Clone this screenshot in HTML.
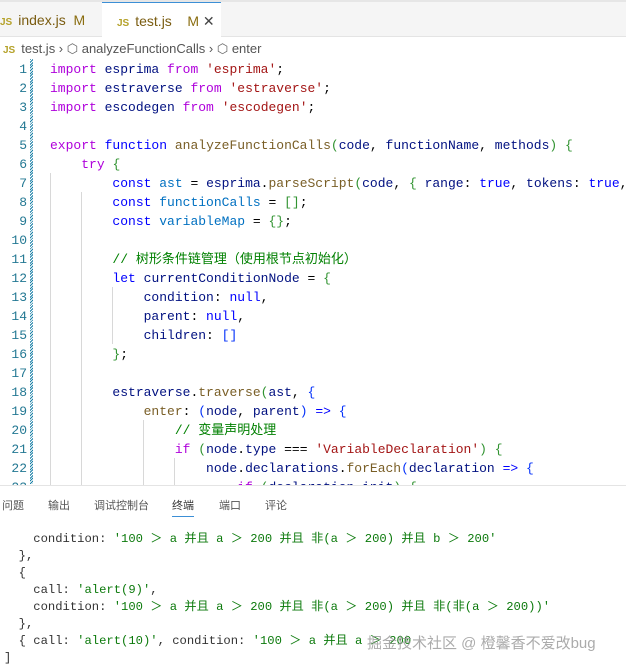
<!DOCTYPE html>
<html><head><meta charset="utf-8"><style>
*{margin:0;padding:0;box-sizing:border-box}
body{width:626px;height:670px;overflow:hidden;background:#fff;position:relative;font-family:"Liberation Sans","Noto Sans CJK SC",sans-serif}
.tabbar{position:absolute;left:0;top:0;width:626px;height:37px;background:#f5f5f5;border-top:2px solid #e6e6e6;border-bottom:1px solid #e4e4e4}
.tab{position:absolute;top:0;height:36px;font-size:14px;line-height:36px;color:#7a5c10}
.js{font-size:10px;font-weight:bold;color:#b5a22a;margin-right:6px}
.m{color:#8a6d10}
.bc{position:absolute;top:38px;left:0;height:22px;font-size:13px;line-height:22px;color:#555;white-space:nowrap}
.code{position:absolute;left:0;top:60px;font-family:"Liberation Mono","Noto Sans CJK SC",monospace;font-size:13px;line-height:19px;white-space:pre}
.ln{position:absolute;left:0;width:27px;text-align:right;color:#237893}
.tx{position:absolute;left:50px;color:#000}
.k{color:#af00db}.b{color:#0000ff}.v{color:#001080}.f{color:#795e26}.s{color:#a31515}.c{color:#008000}.p{color:#0431fa}.y{color:#319331}
.gut{position:absolute;left:30px;top:59px;width:3px;height:425px;background:repeating-linear-gradient(135deg,#1b81a8 0 1px,#fff 1px 2px)}
.g{position:absolute;width:1px;background:#d8d8d8}
.panel{position:absolute;left:0;top:485px;width:626px;height:185px;background:#fff;border-top:1px solid #e4e4e4}
.pt{position:absolute;top:11px;font-size:11px;color:#555}
.term{position:absolute;left:4px;top:531px;font-family:"Liberation Mono","Noto Sans CJK SC",monospace;font-size:12.2px;line-height:17px;white-space:pre;color:#333}
.t{color:#0c7a0c}
.wm{position:absolute;left:367px;top:632px;font-size:15px;color:rgba(150,150,150,.8);white-space:nowrap}
</style></head><body>
<div class="tabbar">
 <div class="tab" style="left:0;width:101px;padding-left:0"><span class="js">JS</span>index.js&nbsp; <span class="m">M</span></div>
 <div class="tab" style="left:102px;width:119px;background:#fff;border-top:1px solid #3c8fd6;padding-left:15px;height:36px"><span class="js">JS</span>test.js &nbsp; &nbsp;<span class="m">M</span> <span style="color:#444">✕</span></div>
</div>
<div class="bc"><span class="js" style="margin-left:3px">JS</span>test.js › <span style="color:#666">⬡</span> analyzeFunctionCalls › <span style="color:#666">⬡</span> enter</div>
<div class="gut"></div>
<div class="g" style="left:50px;top:173px;height:312px"></div>
<div class="g" style="left:81px;top:192px;height:293px"></div>
<div class="g" style="left:112px;top:287px;height:57px"></div>
<div class="g" style="left:143px;top:420px;height:65px"></div>
<div class="g" style="left:174px;top:458px;height:27px"></div>
<div class="code">
<div class="ln" style="top:0">1</div><div class="tx" style="top:0"><span class="k">import</span> <span class="v">esprima</span> <span class="k">from</span> <span class="s">'esprima'</span>;</div>
<div class="ln" style="top:19px">2</div><div class="tx" style="top:19px"><span class="k">import</span> <span class="v">estraverse</span> <span class="k">from</span> <span class="s">'estraverse'</span>;</div>
<div class="ln" style="top:38px">3</div><div class="tx" style="top:38px"><span class="k">import</span> <span class="v">escodegen</span> <span class="k">from</span> <span class="s">'escodegen'</span>;</div>
<div class="ln" style="top:57px">4</div>
<div class="ln" style="top:76px">5</div><div class="tx" style="top:76px"><span class="k">export</span> <span class="b">function</span> <span class="f">analyzeFunctionCalls</span><span class="y">(</span><span class="v">code</span>, <span class="v">functionName</span>, <span class="v">methods</span><span class="y">)</span> <span class="y">{</span></div>
<div class="ln" style="top:95px">6</div><div class="tx" style="top:95px">    <span class="k">try</span> <span class="y">{</span></div>
<div class="ln" style="top:114px">7</div><div class="tx" style="top:114px">        <span class="b">const</span> <span class="b" style="color:#0070c1">ast</span> = <span class="v">esprima</span>.<span class="f">parseScript</span><span class="y">(</span><span class="v">code</span>, <span class="y">{</span> <span class="v">range</span>: <span class="b">true</span>, <span class="v">tokens</span>: <span class="b">true</span>,</div>
<div class="ln" style="top:133px">8</div><div class="tx" style="top:133px">        <span class="b">const</span> <span style="color:#0070c1">functionCalls</span> = <span class="y">[]</span>;</div>
<div class="ln" style="top:152px">9</div><div class="tx" style="top:152px">        <span class="b">const</span> <span style="color:#0070c1">variableMap</span> = <span class="y">{}</span>;</div>
<div class="ln" style="top:171px">10</div>
<div class="ln" style="top:190px">11</div><div class="tx" style="top:190px">        <span class="c">// 树形条件链管理（使用根节点初始化）</span></div>
<div class="ln" style="top:209px">12</div><div class="tx" style="top:209px">        <span class="b">let</span> <span class="v">currentConditionNode</span> = <span class="y">{</span></div>
<div class="ln" style="top:228px">13</div><div class="tx" style="top:228px">            <span class="v">condition</span>: <span class="b">null</span>,</div>
<div class="ln" style="top:247px">14</div><div class="tx" style="top:247px">            <span class="v">parent</span>: <span class="b">null</span>,</div>
<div class="ln" style="top:266px">15</div><div class="tx" style="top:266px">            <span class="v">children</span>: <span class="p">[]</span></div>
<div class="ln" style="top:285px">16</div><div class="tx" style="top:285px">        <span class="y">}</span>;</div>
<div class="ln" style="top:304px">17</div>
<div class="ln" style="top:323px">18</div><div class="tx" style="top:323px">        <span class="v">estraverse</span>.<span class="f">traverse</span><span class="y">(</span><span class="v">ast</span>, <span class="p">{</span></div>
<div class="ln" style="top:342px">19</div><div class="tx" style="top:342px">            <span class="f">enter</span>: <span class="p">(</span><span class="v">node</span>, <span class="v">parent</span><span class="p">)</span> <span class="b">=&gt;</span> <span class="p">{</span></div>
<div class="ln" style="top:361px">20</div><div class="tx" style="top:361px">                <span class="c">// 变量声明处理</span></div>
<div class="ln" style="top:380px">21</div><div class="tx" style="top:380px">                <span class="k">if</span> <span class="y">(</span><span class="v">node</span>.<span class="v">type</span> === <span class="s">'VariableDeclaration'</span><span class="y">)</span> <span class="y">{</span></div>
<div class="ln" style="top:399px">22</div><div class="tx" style="top:399px">                    <span class="v">node</span>.<span class="v">declarations</span>.<span class="f">forEach</span><span class="p">(</span><span class="v">declaration</span> <span class="b">=&gt;</span> <span class="p">{</span></div>
<div class="ln" style="top:418px">23</div><div class="tx" style="top:418px">                        <span class="k">if</span> <span class="y">(</span><span class="v">declaration</span>.<span class="v">init</span><span class="y">)</span> <span class="y">{</span></div>
</div>
<div class="panel">
 <div class="pt" style="left:2px">问题</div>
 <div class="pt" style="left:48px">输出</div>
 <div class="pt" style="left:94px">调试控制台</div>
 <div class="pt" style="left:172px;color:#333;border-bottom:1px solid #3c8fd6;padding-bottom:3px">终端</div>
 <div class="pt" style="left:219px">端口</div>
 <div class="pt" style="left:265px">评论</div>
</div>
<div class="term">    condition: <span class="t">'100 ＞ a 并且 a ＞ 200 并且 非(a ＞ 200) 并且 b ＞ 200'</span>
  },
  {
    call: <span class="t">'alert(9)'</span>,
    condition: <span class="t">'100 ＞ a 并且 a ＞ 200 并且 非(a ＞ 200) 并且 非(非(a ＞ 200))'</span>
  },
  { call: <span class="t">'alert(10)'</span>, condition: <span class="t">'100 ＞ a 并且 a ＞ 200</span>
]</div>
<div class="wm">掘金技术社区 @ 橙馨香不爱改bug</div>
</body></html>
